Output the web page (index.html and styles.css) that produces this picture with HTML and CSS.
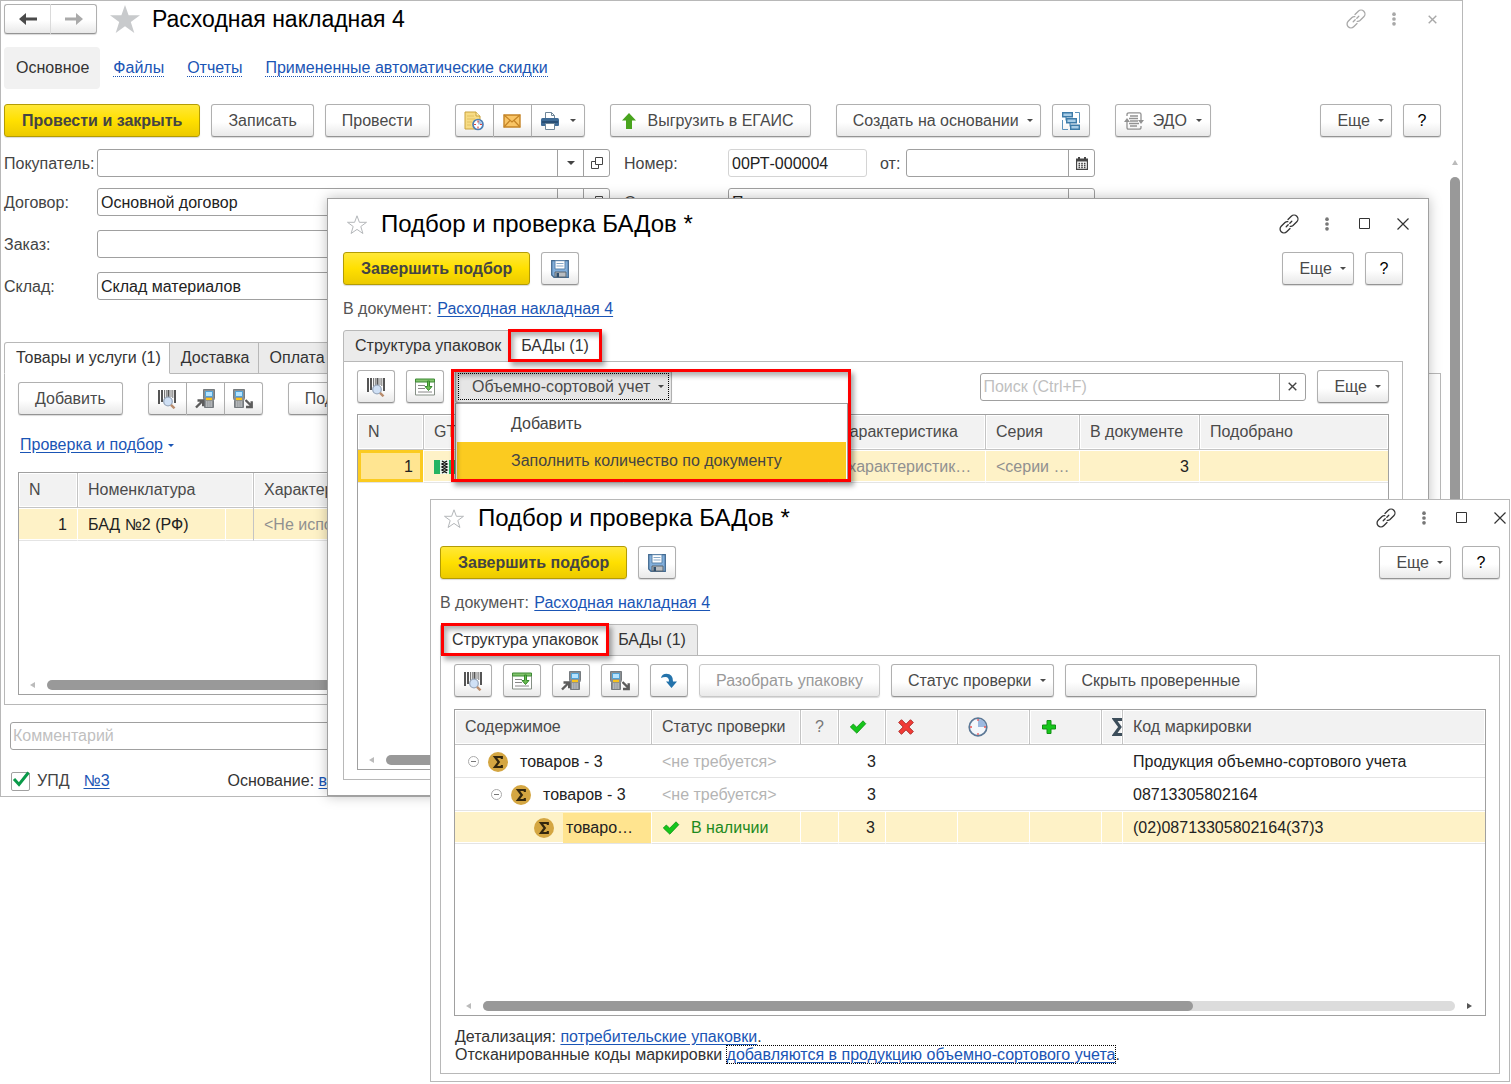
FILE: index.html
```html
<!DOCTYPE html>
<html lang="ru">
<head>
<meta charset="utf-8">
<title>Расходная накладная 4</title>
<link rel="stylesheet" href="styles.css">
</head>
<body>
<svg class="sprite" aria-hidden="true">
  <symbol id="i-star" viewBox="0 0 30 28"><path d="M15 0l3.600 10.200H30l-9.200 6.700L24.300 28 15 21.300 5.700 28l3.500-11.100L0 10.200h11.400z"/></symbol>
  <symbol id="i-star-o" viewBox="0 0 22 21"><path d="M11 1.800l2.400 6.500h7.100l-5.700 4.200 2.100 7L11 15.400l-5.900 4.100 2.100-7L1.500 8.300h7.100z" fill="#fff" stroke="#b4b7ba"/></symbol>
  <symbol id="i-back" viewBox="0 0 18 12"><path d="M0 6l7-6v4.500h11v3H7V12z"/></symbol>
  <symbol id="i-link" viewBox="0 0 20 20"><g fill="none" stroke="currentColor" stroke-width="1.300" stroke-linecap="round"><path d="M9 5.500l3.300-3.300a3.800 3.800 0 0 1 5.500 5.500l-3.800 3.800q-1.300 1.200-2.800.9"/><path d="M11 14.500l-3.300 3.300a3.800 3.800 0 0 1-5.500-5.500L6 8.500q1.300-1.200 2.800-.9"/><path d="M7.200 12.800l2-2M10.800 9.200l2-2"/></g></symbol>
  <symbol id="i-dots" viewBox="0 0 6 16"><circle cx="3" cy="2.500" r="2.100"/><circle cx="3" cy="8" r="2.100"/><circle cx="3" cy="13.500" r="2.100"/></symbol>
  <symbol id="i-max" viewBox="0 0 12 12"><path d="M.5 .5h10v10h-10z" fill="none" stroke="currentColor"/></symbol>
  <symbol id="i-close" viewBox="0 0 12 12"><path d="M.5.5l11 11M11.500.5l-11 11" fill="none" stroke="currentColor" stroke-width="1.200"/></symbol>
  <symbol id="i-close-s" viewBox="0 0 9 9"><path d="M.7.7l7.600 7.600M8.300.7L.7 8.300" fill="none" stroke="currentColor" stroke-width="1.400"/></symbol>
  <symbol id="i-note" viewBox="0 0 20 20"><path d="M1 1h11l4 4v13H1z" fill="#f7dc85" stroke="#c9a23c"/><path d="M12 1v4h4" fill="#fff3c0" stroke="#c9a23c"/><path d="M3 5h7M3 8h8M3 11h5M3 14h4" stroke="#e3c263"/><circle cx="14" cy="13.500" r="5" fill="#fff" stroke="#4e7fb5" stroke-width="1.700"/><path d="M14 13.500V9.500a4 4 0 0 1 4 4z" fill="#a8c3e4"/><path d="M14 9.500v2M14 15.500v2M10 13.500h2M16 13.500h2" stroke="#e2453c" stroke-width="1.200"/></symbol>
  <symbol id="i-mail" viewBox="0 0 18 14"><path d="M1 1h16v12H1z" fill="#f9c566" stroke="#c58426" stroke-width="1.400"/><path d="M1 1l8 7 8-7M1 13l6-6.500M17 13l-6-6.500" fill="none" stroke="#c58426" stroke-width="1.200"/></symbol>
  <symbol id="i-print" viewBox="0 0 20 20"><path d="M5.500 8V1.500h6l3 3V8" fill="#fff" stroke="#6f8698"/><path d="M11.500 1.500v3h3" fill="none" stroke="#6f8698"/><path d="M1 8.500Q1 7 2.500 7h15Q19 7 19 8.500V14q0 1-1 1H2q-1 0-1-1z" fill="#3f6b96"/><path d="M2 11h16" stroke="#23466a" stroke-width="1.500"/><path d="M5.500 12.500h9v6h-9z" fill="#fff" stroke="#6f8698"/></symbol>
  <symbol id="i-up" viewBox="0 0 14 16"><path d="M7 0l7 7.500h-4V16H4V7.500H0z" fill="#49a41e"/></symbol>
  <symbol id="i-tree" viewBox="0 0 18 18"><path d="M13 .5h4.500V11M.5 8v9.500H6" fill="none" stroke="#5d93bb"/><path d="M4 5v3.500h1M8 11v3.500h1" fill="none" stroke="#3e7ca9"/><path d="M.7.700h9.600v4.100H.7zM4.700 6.700h9.600v4.100H4.700zM8.700 13.200h8.600v4.100H8.700z" fill="#a9cde6" stroke="#3e7ca9" stroke-width="1.400"/></symbol>
  <symbol id="i-edo" viewBox="0 0 20 18"><g fill="none" stroke="#929292" stroke-width="1.300"><path d="M3 4V2.500Q3 .8 5 .8h10.500Q17 .8 17 2.500V9M17 14v1.500q0 1.700-2 1.700H4.500Q3 17.200 3 15.500V9"/><path d="M6 4h8M5 6.500h9M6 9h8M5 11.500h10M6 14h7"/></g><path d="M3 6l3 4H0zM17 12l3-4h-6z" fill="#929292"/></symbol>
  <symbol id="i-open" viewBox="0 0 12 12"><path d="M4.500.5h7v7h-7zM4.500 4.500h-4v7h7v-4" fill="none" stroke="#444"/></symbol>
  <symbol id="i-cal" viewBox="0 0 12 13"><path d="M.6 2.500h10.800v9.900H.6z" fill="#fff" stroke="#444" stroke-width="1.200"/><path d="M0 1.500h12v3H0z" fill="#444"/><path d="M3 0v3M9 0v3" stroke="#444" stroke-width="2"/><path d="M2.500 6.500h7M2.500 8.500h7M2.500 10.500h7" stroke="#444" stroke-width="1.400" stroke-dasharray="1.600 1.100"/></symbol>
  <symbol id="i-barcode" viewBox="0 0 20 20"><path d="M2 1v14M5 1v12M11.500 1v7M18 1v13" stroke="#555" stroke-width="2"/><path d="M7.500 1v13M9.300 1v7M14 1v7M15.800 1v8" stroke="#777"/><circle cx="11" cy="12.500" r="4.300" fill="#cfe0f5" stroke="#9aa9bd" stroke-width="1.300"/><path d="M14 15.800l3.500 3.500" stroke="#b98d6e" stroke-width="2.400"/></symbol>
  <symbol id="i-fill" viewBox="0 0 20 17"><path d="M.5 3v13.500h19V3" fill="#fff" stroke="#858f85"/><path d="M.5.5h19v3H.5z" fill="#82c36c" stroke="#3d8b35"/><path d="M3 7h7M3 10h7M3 13.500h14" stroke="#888"/><path d="M12.500 2.500h2V8H17l-3.500 4L10 8h2.500z" fill="#68bc4f" stroke="#36882d"/></symbol>
  <symbol id="i-tsd" viewBox="0 0 12 19"><path d="M.5 .5h11v9l-1 2v7h-9v-7l-1-2z" fill="#8b8f92" stroke="#767b7f"/><path d="M2.500 2.500h7v5h-7z" fill="#b5e3ff" stroke="#4fa3d8"/><path d="M3 10h6" stroke="#f8c21c" stroke-width="2.200"/><path d="M3 13h6M3 15h6M3 17h6" stroke="#dfe1e3" stroke-dasharray="1.500 .7"/></symbol>
  <symbol id="i-tsd-in" viewBox="0 0 20 20"><use href="#i-tsd" x="8" y="0" width="12" height="19"/><path d="M1 18.500l6-6M2.500 11.500h5.700v5.700" fill="none" stroke="#5c5c5c" stroke-width="2.400"/></symbol>
  <symbol id="i-tsd-out" viewBox="0 0 20 20"><use href="#i-tsd" x="0" y="0" width="12" height="19"/><path d="M12.500 11l6 6M13 18h5.700v-5.700" fill="none" stroke="#5c5c5c" stroke-width="2.400"/></symbol>
  <symbol id="i-turn" viewBox="0 0 16 15"><path d="M0 4.500Q1 .3 5.500.3 12 .3 12 8h4l-5.500 6.500L5 8h3Q8 3.500 4.500 3.500 2 3.500 0 4.500z" fill="#2473ab"/></symbol>
  <symbol id="i-save" viewBox="0 0 18 18"><path d="M.7.700h16.600v16.600H3L.7 15z" fill="#81aedb" stroke="#446b91" stroke-width="1.300"/><path d="M4 .700h10V9H4z" fill="#fff" stroke="#5b83aa"/><path d="M5.500 3.500h7M5.500 6h7" stroke="#88a9c8"/><path d="M4 12h11v5H4z" fill="#b9bdc1" stroke="#5b6670"/><path d="M5.500 13H8v4H5.500z" fill="#2f4e6c"/></symbol>
  <symbol id="i-sigma" viewBox="0 0 20 20"><circle cx="10" cy="10" r="10" fill="#d4a642"/><path d="M13.800 7V5H7L10.800 10 7 15h6.800V13" fill="none" stroke="#33270e" stroke-width="2.200"/></symbol>
  <symbol id="i-check" viewBox="0 0 17 14"><path d="M.8 7l3-3 3.400 3.200L13.500.8 16.300 3.700 7.300 13.200z" fill="#16c61b" stroke="#129115" stroke-width=".8"/></symbol>
  <symbol id="i-cross" viewBox="0 0 16 16"><path d="M3.500.7L8 5.200 12.500.7l2.800 2.800L10.800 8l4.500 4.500-2.800 2.800L8 10.800l-4.500 4.500L.7 12.500 5.200 8 .7 3.500z" fill="#f23b36" stroke="#b02f2c"/></symbol>
  <symbol id="i-clock" viewBox="0 0 20 20"><circle cx="10" cy="10" r="8.800" fill="#f4f7fb" stroke="#5c7896" stroke-width="1.700"/><path d="M10 10V2a8 8 0 0 1 8 8z" fill="#9db9e0"/><path d="M10 2v2M10 16v2M2 10h2M16 10h2" stroke="#e55" stroke-width="1.300"/></symbol>
  <symbol id="i-plus" viewBox="0 0 14 14"><path d="M5 .5h4V5h4.500v4H9v4.500H5V9H.5V5H5z" fill="#16c61b" stroke="#129115"/></symbol>
  <symbol id="i-sum" viewBox="0 0 14 18"><path d="M14 1.500H2.500L8 9l-5.500 7.500H14" fill="none" stroke="#3c4d5a" stroke-width="3"/></symbol>
  <symbol id="i-minus" viewBox="0 0 11 11"><circle cx="5.500" cy="5.500" r="5" fill="#fff" stroke="#aaa"/><path d="M3 5.500h5" stroke="#777"/></symbol>
  <symbol id="i-tick" viewBox="0 0 18 16"><path d="M2 8l5 5.500L16.500 1.500" fill="none" stroke="#0a9a49" stroke-width="3"/></symbol>
  <symbol id="i-mark" viewBox="0 0 24 14"><path d="M0 0h24v14H0z" fill="#25b463"/><path d="M6 0h9v14H6z" fill="#e8f5ec"/><path d="M8 1l5 3-5 3 5 3-5 3M13 1L8 4l5 3-5 3 5 3" fill="none" stroke="#111" stroke-width="1.400"/></symbol>
</svg>

<main class="desktop">

  <section class="window window-doc" aria-label="Расходная накладная 4">
    <header class="titlebar">
      <div class="group nav-group">
        <button type="button" class="btn" aria-label="Назад"><svg class="ic nav"><use href="#i-back"/></svg></button>
        <button type="button" class="btn" aria-label="Вперед"><svg class="ic nav forward"><use href="#i-back"/></svg></button>
      </div>
      <svg class="star-full"><use href="#i-star"/></svg>
      <h1>Расходная накладная 4</h1>
      <div class="win-tools muted">
        <button type="button" aria-label="Ссылка"><svg class="ic s20"><use href="#i-link"/></svg></button>
        <button type="button" aria-label="Меню"><svg class="ic dots"><use href="#i-dots"/></svg></button>
        <button type="button" aria-label="Закрыть"><svg class="ic s9"><use href="#i-close-s"/></svg></button>
      </div>
    </header>
    <nav class="sections">
      <span class="current">Основное</span>
      <a href="#">Файлы</a>
      <a href="#">Отчеты</a>
      <a href="#">Примененные автоматические скидки</a>
    </nav>
    <div class="toolbar main-tools">
      <div class="cluster">
        <button type="button" class="btn primary">Провести и закрыть</button>
        <button type="button" class="btn">Записать</button>
        <button type="button" class="btn">Провести</button>
      </div>
      <div class="group">
        <button type="button" class="btn icon" aria-label="Дата"><svg class="ic s20"><use href="#i-note"/></svg></button>
        <button type="button" class="btn icon" aria-label="Письмо"><svg class="ic mail"><use href="#i-mail"/></svg></button>
        <button type="button" class="btn print" aria-label="Печать"><svg class="ic s20"><use href="#i-print"/></svg><i class="caret"></i></button>
      </div>
      <button type="button" class="btn with-icon egais"><svg class="ic up"><use href="#i-up"/></svg>Выгрузить в ЕГАИС</button>
      <div class="cluster">
        <button type="button" class="btn drop">Создать на основании<i class="caret"></i></button>
        <button type="button" class="btn icon" aria-label="Структура подчиненности"><svg class="ic s18"><use href="#i-tree"/></svg></button>
      </div>
      <button type="button" class="btn with-icon drop edo"><svg class="ic s20"><use href="#i-edo"/></svg>ЭДО<i class="caret"></i></button>
      <div class="cluster end">
        <button type="button" class="btn drop">Еще<i class="caret"></i></button>
        <button type="button" class="btn icon help">?</button>
      </div>
    </div>

    <div class="doc-body">
      <div class="doc-form">
        <div class="fields">
          <div class="field-row">
            <label for="buyer">Покупатель:</label>
            <div class="combo wide"><input id="buyer" type="text"><button type="button" aria-label="Выбрать"><i class="caret big"></i></button><button type="button" aria-label="Открыть"><svg class="ic s12"><use href="#i-open"/></svg></button></div>
            <label for="num" class="second">Номер:</label>
            <div class="combo num"><input id="num" type="text" value="00РТ-000004"></div>
            <label for="date" class="third">от:</label>
            <div class="combo date"><input id="date" type="text"><button type="button" aria-label="Календарь"><svg class="ic cal"><use href="#i-cal"/></svg></button></div>
          </div>
          <div class="field-row">
            <label for="contract">Договор:</label>
            <div class="combo wide"><input id="contract" type="text" value="Основной договор"><button type="button" aria-label="Выбрать"><i class="caret big"></i></button><button type="button" aria-label="Открыть"><svg class="ic s12"><use href="#i-open"/></svg></button></div>
            <label for="org" class="second">Организация:</label>
            <div class="combo org"><input id="org" type="text" value="Продавец"><button type="button" aria-label="Открыть"></button></div>
          </div>
        </div>
        <div class="fields loose">
          <div class="field-row">
            <label for="order">Заказ:</label>
            <div class="combo wide"><input id="order" type="text"></div>
          </div>
          <div class="field-row">
            <label for="store">Склад:</label>
            <div class="combo wide"><input id="store" type="text" value="Склад материалов"></div>
          </div>
        </div>

        <div class="tabs doc-tabs">
          <button type="button" class="tab active">Товары и услуги (1)</button>
          <button type="button" class="tab">Доставка</button>
          <button type="button" class="tab">Оплата</button>
        </div>
        <div class="panel">
          <div class="toolbar spaced">
            <button type="button" class="btn">Добавить</button>
            <div class="group">
              <button type="button" class="btn icon" aria-label="Поиск по штрихкоду"><svg class="ic s20"><use href="#i-barcode"/></svg></button>
              <button type="button" class="btn icon" aria-label="Загрузить из ТСД"><svg class="ic s20"><use href="#i-tsd-in"/></svg></button>
              <button type="button" class="btn icon" aria-label="Выгрузить в ТСД"><svg class="ic s20"><use href="#i-tsd-out"/></svg></button>
            </div>
            <button type="button" class="btn">Подбор</button>
          </div>
          <p class="check-link"><a href="#">Проверка и подбор</a><i class="caret"></i></p>
          <div class="grid-box">
            <table>
              <colgroup><col class="w59"><col class="w148"><col class="w28"><col></colgroup>
              <thead><tr><th>N</th><th colspan="2">Номенклатура</th><th>Характеристика</th></tr></thead>
              <tbody><tr class="picked"><td class="num-cell">1</td><td>БАД №2 (РФ)</td><td class="ruled"></td><td class="pale">&lt;Не используется&gt;</td></tr></tbody>
            </table>
            <div class="hscroll"><i class="arrow left"></i><span class="track"><span class="thumb"></span></span></div>
          </div>
        </div>
        <div class="combo comment"><input type="text" placeholder="Комментарий" aria-label="Комментарий"></div>
        <div class="bottom-row">
          <label class="tickbox"><span class="box"><input type="checkbox" checked><svg><use href="#i-tick"/></svg></span>УПД</label>
          <a href="#">№3</a>
          <span class="basis">Основание: <a href="#">выбрать</a></span>
        </div>
      </div>
      <div class="vscroll"><i class="arrow top"></i><span class="thumb"></span></div>
    </div>
  </section>

  <section class="window window-pick" aria-label="Подбор и проверка БАДов">
    <header class="titlebar">
      <svg class="star-line"><use href="#i-star-o"/></svg>
      <h2>Подбор и проверка БАДов *</h2>
      <div class="win-tools">
        <button type="button" aria-label="Ссылка"><svg class="ic s20"><use href="#i-link"/></svg></button>
        <button type="button" aria-label="Меню"><svg class="ic dots"><use href="#i-dots"/></svg></button>
        <button type="button" aria-label="Развернуть"><svg class="ic s12"><use href="#i-max"/></svg></button>
        <button type="button" aria-label="Закрыть"><svg class="ic s12"><use href="#i-close"/></svg></button>
      </div>
    </header>
    <div class="toolbar">
      <button type="button" class="btn primary">Завершить подбор</button>
      <button type="button" class="btn icon" aria-label="Сохранить"><svg class="ic s18"><use href="#i-save"/></svg></button>
      <div class="cluster end">
        <button type="button" class="btn drop">Еще<i class="caret"></i></button>
        <button type="button" class="btn icon help">?</button>
      </div>
    </div>
    <p class="doc-ref">В документ: <a href="#">Расходная накладная 4</a></p>
    <div class="tabs">
      <button type="button" class="tab">Структура упаковок</button>
      <button type="button" class="tab active">БАДы (1)<span class="callout on-right"></span></button>
    </div>
    <div class="panel">
      <div class="toolbar">
        <button type="button" class="btn icon" aria-label="Поиск по штрихкоду"><svg class="ic s20"><use href="#i-barcode"/></svg></button>
        <button type="button" class="btn icon" aria-label="Заполнить"><svg class="ic s20"><use href="#i-fill"/></svg></button>
        <div class="menu-anchor">
          <button type="button" class="btn drop pressed">Объемно-сортовой учет<i class="caret"></i></button>
          <div class="menu" role="menu">
            <button type="button" role="menuitem">Добавить</button>
            <button type="button" role="menuitem" class="hot">Заполнить количество по документу</button>
          </div>
          <span class="callout on-menu"></span>
        </div>
        <div class="cluster end">
          <div class="combo search"><input type="search" placeholder="Поиск (Ctrl+F)" aria-label="Поиск"><button type="button" aria-label="Очистить"><svg class="ic s9"><use href="#i-close-s"/></svg></button></div>
          <button type="button" class="btn drop">Еще<i class="caret"></i></button>
        </div>
      </div>
      <div class="grid-box">
        <table>
          <colgroup><col class="w66"><col class="w200"><col class="w205"><col class="w157"><col class="w94"><col class="w120"><col></colgroup>
          <thead><tr><th>N</th><th>GTIN</th><th>Номенклатура</th><th>Характеристика</th><th>Серия</th><th>В документе</th><th>Подобрано</th></tr></thead>
          <tbody><tr class="picked"><td class="num-cell focus-cell">1</td><td class="mark-cell"><svg><use href="#i-mark"/></svg></td><td></td><td class="pale">&lt;характеристик…</td><td class="pale">&lt;серии …</td><td class="num-cell">3</td><td></td></tr></tbody>
        </table>
        <div class="hscroll"><i class="arrow left"></i><span class="track"><span class="thumb"></span></span></div>
      </div>
    </div>
  </section>

  <section class="window window-pack" aria-label="Структура упаковок">
    <header class="titlebar">
      <svg class="star-line"><use href="#i-star-o"/></svg>
      <h2>Подбор и проверка БАДов *</h2>
      <div class="win-tools">
        <button type="button" aria-label="Ссылка"><svg class="ic s20"><use href="#i-link"/></svg></button>
        <button type="button" aria-label="Меню"><svg class="ic dots"><use href="#i-dots"/></svg></button>
        <button type="button" aria-label="Развернуть"><svg class="ic s12"><use href="#i-max"/></svg></button>
        <button type="button" aria-label="Закрыть"><svg class="ic s12"><use href="#i-close"/></svg></button>
      </div>
    </header>
    <div class="toolbar">
      <button type="button" class="btn primary">Завершить подбор</button>
      <button type="button" class="btn icon" aria-label="Сохранить"><svg class="ic s18"><use href="#i-save"/></svg></button>
      <div class="cluster end">
        <button type="button" class="btn drop">Еще<i class="caret"></i></button>
        <button type="button" class="btn icon help">?</button>
      </div>
    </div>
    <p class="doc-ref">В документ: <a href="#">Расходная накладная 4</a></p>
    <div class="tabs">
      <button type="button" class="tab active">Структура упаковок<span class="callout on-left"></span></button>
      <button type="button" class="tab">БАДы (1)</button>
    </div>
    <div class="panel">
      <div class="toolbar">
        <button type="button" class="btn icon" aria-label="Поиск по штрихкоду"><svg class="ic s20"><use href="#i-barcode"/></svg></button>
        <button type="button" class="btn icon" aria-label="Заполнить"><svg class="ic s20"><use href="#i-fill"/></svg></button>
        <button type="button" class="btn icon" aria-label="Загрузить из ТСД"><svg class="ic s20"><use href="#i-tsd-in"/></svg></button>
        <button type="button" class="btn icon" aria-label="Выгрузить в ТСД"><svg class="ic s20"><use href="#i-tsd-out"/></svg></button>
        <button type="button" class="btn icon" aria-label="Перейти"><svg class="ic s16"><use href="#i-turn"/></svg></button>
        <button type="button" class="btn" disabled>Разобрать упаковку</button>
        <button type="button" class="btn drop">Статус проверки<i class="caret"></i></button>
        <button type="button" class="btn">Скрыть проверенные</button>
      </div>
      <div class="grid-box">
        <table class="tree">
          <colgroup><col class="w197"><col class="w149"><col class="w38"><col class="w47"><col class="w72"><col class="w72"><col class="w72"><col class="w21"><col></colgroup>
          <thead><tr>
            <th>Содержимое</th><th>Статус проверки</th><th class="center">?</th>
            <th><svg class="ic check"><use href="#i-check"/></svg></th>
            <th class="inset"><svg class="ic s16"><use href="#i-cross"/></svg></th>
            <th><svg class="ic s20"><use href="#i-clock"/></svg></th>
            <th class="inset"><svg class="ic s14"><use href="#i-plus"/></svg></th>
            <th class="tight"><svg class="ic sum"><use href="#i-sum"/></svg></th>
            <th>Код маркировки</th>
          </tr></thead>
          <tbody>
            <tr><td class="node"><div class="node-in"><svg class="ic s11"><use href="#i-minus"/></svg><svg class="ic s20"><use href="#i-sigma"/></svg><span>товаров - 3</span></div></td><td class="faint">&lt;не требуется&gt;</td><td></td><td class="num-cell">3</td><td></td><td></td><td></td><td></td><td>Продукция объемно-сортового учета</td></tr>
            <tr><td class="node"><div class="node-in level2"><svg class="ic s11"><use href="#i-minus"/></svg><svg class="ic s20"><use href="#i-sigma"/></svg><span>товаров - 3</span></div></td><td class="faint">&lt;не требуется&gt;</td><td></td><td class="num-cell">3</td><td></td><td></td><td></td><td></td><td>08713305802164</td></tr>
            <tr class="picked"><td class="node"><div class="node-in level3"><svg class="ic s20"><use href="#i-sigma"/></svg><span>товаро…</span></div></td><td class="ok"><svg class="ic check"><use href="#i-check"/></svg>В наличии</td><td></td><td class="num-cell">3</td><td></td><td></td><td></td><td></td><td>(02)08713305802164(37)3</td></tr>
          </tbody>
        </table>
        <div class="hscroll"><i class="arrow left"></i><span class="track light"><span class="thumb part"></span></span><i class="arrow right"></i></div>
      </div>
      <p class="details">Детализация: <a href="#">потребительские упаковки</a>.<br>Отсканированные коды маркировки <a href="#" class="focused">добавляются в продукцию объемно-сортового учета</a>.</p>
    </div>
  </section>

</main>
</body>
</html>
```
FILE: styles.css
```css
:root {
  --line: #a0a0a0;
  --soft-line: #b8b8b8;
  --text: #333;
  --link: #1a55b5;
  --picked: #fef2c7;
}

* { box-sizing: border-box; }

body {
  margin: 0;
  background: #fff;
  color: var(--text);
  font: 16px/18px "Liberation Sans", Arial, sans-serif;
}

button, input { font: inherit; color: inherit; }
button { margin: 0; padding: 0; white-space: nowrap; }
p, h1, h2 { margin: 0; }
a { color: var(--link); text-underline-offset: 2px; }

.sprite { position: absolute; width: 0; height: 0; }

/* Windows on the desktop */
.desktop { position: relative; min-height: 1084px; overflow: hidden; }

.window {
  position: absolute;
  display: flex;
  flex-direction: column;
  background: #fff;
  border: 1px solid var(--soft-line);
}
.window-doc { top: 0; left: 0; right: 48px; min-height: 797px; padding: 3px 21px 5px 3px; overflow: hidden; }
.window-pick {
  top: 198px; left: 327px; right: 82px; min-height: 598px;
  padding: 8px 25px 15px 15px;
  border-color: var(--line);
  box-shadow: 0 0 12px rgba(0, 0, 0, .25);
}
.window-pack { top: 499px; left: 430px; right: 1px; min-height: 583px; padding: 1px 9px 7px 9px; }

/* Icons */
.ic { display: block; flex: none; fill: currentColor; }
.s9 { width: 9px; height: 9px; }
.s11 { width: 11px; height: 11px; }
.s12 { width: 12px; height: 12px; }
.s14 { width: 14px; height: 14px; }
.s16 { width: 16px; height: 16px; }
.s18 { width: 18px; height: 18px; }
.s20 { width: 20px; height: 20px; }
.nav { width: 18px; height: 12px; }
.dots { width: 6px; height: 14px; }
.mail { width: 18px; height: 14px; }
.up { width: 14px; height: 16px; }
.cal { width: 12px; height: 13px; }
.check { width: 18px; height: 14px; }
.sum { width: 14px; height: 18px; }

.caret {
  flex: none;
  display: inline-block;
  border: 3px solid transparent;
  border-top-color: currentColor;
  border-bottom-width: 0;
}
.caret.big { border-width: 4px 4px 0; }

/* Title bar */
.titlebar { display: flex; align-items: center; height: 34px; margin-bottom: 11px; }
.window-doc .titlebar { height: 30px; margin-bottom: 13px; }
.titlebar h1, .titlebar h2 { color: #000; font-size: 24px; font-weight: 400; line-height: 30px; white-space: nowrap; }
.titlebar h1 { font-size: 23px; }
.star-full { width: 30px; height: 28px; margin: 0 12px 0 13px; fill: #c8cacc; }
.star-line { width: 22px; height: 21px; margin: 0 13px 0 3px; }
.nav-group { color: #444; }
.nav-group .btn { width: 46px; height: 30px; padding: 0; }
.forward { transform: rotate(180deg); color: #aaa; }

.win-tools { display: flex; gap: 20px; margin: 0 -9px 0 auto; color: #333; }
.win-tools.muted { margin-right: 0; color: #a8a8a8; }
.win-tools button { display: flex; justify-content: center; align-items: center; width: 18px; height: 20px; border: 0; background: none; }
.win-tools .dots { color: #777; }
.win-tools.muted .dots { color: #a8a8a8; }

/* Section links */
.sections { display: flex; align-items: center; gap: 23px; height: 42px; margin-bottom: 15px; white-space: nowrap; }
.sections .current { padding: 12px 11px 12px 12px; margin-right: -10px; border-radius: 4px; background: #f1f1f1; }
.sections a { text-decoration: none; border-bottom: 1px dotted var(--link); line-height: 17px; }

/* Buttons */
.toolbar, .cluster { display: flex; align-items: center; gap: 11px; }
.toolbar { flex: none; }
.main-tools, .toolbar.spaced { gap: 25px; }
.end { margin-left: auto; }

.btn {
  display: flex;
  align-items: center;
  justify-content: center;
  flex: none;
  height: 33px;
  padding: 0 16px;
  border: 1px solid #b0b0b0;
  border-bottom-color: #949494;
  border-radius: 3px;
  background: linear-gradient(#fff, #fff 55%, #e9e9e9);
  box-shadow: 0 1px 1px rgba(0, 0, 0, .15);
  color: #4a4a4a;
}
.btn.primary {
  padding: 0 17px;
  border-color: #b39c05;
  background: linear-gradient(#ffe838, #ffe000 50%, #ecca00);
  color: #444;
  font-weight: 700;
}
.btn.icon { width: 38px; padding: 0; }
.btn.help { color: #000; }
.btn.drop { padding-right: 7px; gap: 8px; }
.btn.with-icon { padding-left: 11px; gap: 12px; }
.btn.edo { padding: 0 8px; gap: 9px; }
.btn.print { width: 53px; padding: 0; gap: 10px; }
.btn:disabled { color: #999; border-color: #c8c8c8; }
.btn.pressed {
  background: #e6e6e6;
  outline: 1px dotted #000;
  outline-offset: -4px;
}

.group { display: flex; }
.group .btn { border-radius: 0; }
.group .btn + .btn { border-left: 0; }
.group .btn:first-child { border-radius: 3px 0 0 3px; width: 39px; }
.group .btn:last-child { border-radius: 0 3px 3px 0; }
.group.nav-group .btn:first-child { width: 47px; border-right-color: #ddd; }

/* Fields */
.doc-body { display: flex; flex: 1; margin: 12px -19px 0 0; }
.doc-form { display: flex; flex: 1; flex-direction: column; min-width: 0; }
.fields { display: flex; flex-direction: column; gap: 11px; }
.fields.loose { gap: 14px; margin-top: 14px; }
.field-row { display: flex; align-items: center; color: #444; }
.field-row label { flex: none; width: 93px; padding-top: 1px; }
.field-row .second { width: 104px; margin-left: 14px; }
.field-row .third { width: 26px; margin-left: 13px; }

.combo { display: flex; flex: none; height: 28px; border: 1px solid var(--line); border-radius: 3px; background: #fff; }
.combo input { flex: 1; min-width: 0; padding: 1px 3px 0; border: 0; background: none; outline: 0; color: #222; }
.combo input::placeholder { color: #bfbfbf; opacity: 1; }
.combo button { display: flex; align-items: center; justify-content: center; width: 26px; border: 0; border-left: 1px solid var(--line); background: none; color: #444; }
.wide { width: 513px; }
.num { width: 139px; border-color: #d4d4d4; }
.date { width: 189px; }
.org { width: 367px; }
.search { width: 326px; }
.search input { padding: 0 2px; appearance: none; }
.comment { margin: 17px 0 0 6px; }
.comment input { padding: 0 2px; }

/* Tabs */
.tabs { position: relative; display: flex; flex: none; margin: 13px 0 -1px; }
.doc-tabs { margin-top: 42px; }
.tab {
  position: relative;
  height: 32px;
  padding: 0 8px 0 11px;
  border: 1px solid var(--soft-line);
  border-left-width: 0;
  background: #ebebeb;
  color: #333;
}
.tab:first-child { border-left-width: 1px; border-top-left-radius: 3px; }
.tab:last-child { padding-right: 11px; border-top-right-radius: 3px; }
.tab.active { border-bottom-color: #fff; background: #fff; }

.panel { display: flex; flex: 1; flex-direction: column; padding: 8px 13px 9px; border: 1px solid var(--soft-line); }

.check-link { margin: 21px 0 7px 2px; color: var(--link); }
.check-link .caret { margin: 0 0 3px 5px; }
.doc-ref { margin-top: 14px; padding-top: 1px; margin-bottom: -1px; color: #555; }
.doc-ref a { margin-left: 1px; }

/* Tables */
.grid-box { display: flex; flex: 1; flex-direction: column; margin-top: 11px; border: 1px solid var(--line); }
.window-pack .grid-box { margin-top: 12px; }
table { width: 100%; table-layout: fixed; border-spacing: 0; }
th, td { padding: 0 10px; overflow: hidden; text-align: left; white-space: nowrap; font-weight: 400; }
th { height: 35px; border-right: 1px solid #c4c4c4; border-bottom: 1px solid #c4c4c4; background: #f2f2f2; box-shadow: inset 0 0 0 1px #fff; color: #4a4a4a; }
th.inset { padding-left: 12px; }
th.tight { padding-right: 0; }
td { height: 33px; padding-top: 1px; border-bottom: 1px solid #e4e4e4; color: #222; }
th:last-child { border-right: 0; }
.picked td { border-right: 1px solid #fff; background: var(--picked); box-shadow: inset 0 -1px #fff, inset 0 1px #fff; }
.picked td:last-child { border-right: 0; }
.picked .ruled { border-right-color: #c4c4c4; }
.num-cell { text-align: right; }
.center { text-align: center; color: #777; }
td.pale { color: #909090; }
td.faint { color: #b4b4b4; }
td.ok { color: #1d8a1d; }
.ok .ic { display: inline-block; margin-right: 11px; vertical-align: -2px; }
.picked .focus-cell { background: #ffe591; box-shadow: inset 0 0 0 3px #fbcb20; }
.mark-cell svg { display: block; width: 24px; height: 14px; }

.w21 { width: 21px; } .w28 { width: 28px; } .w38 { width: 38px; } .w47 { width: 47px; }
.w59 { width: 59px; } .w66 { width: 66px; } .w72 { width: 72px; } .w94 { width: 94px; }
.w120 { width: 120px; } .w148 { width: 148px; } .w149 { width: 149px; } .w157 { width: 157px; }
.w197 { width: 197px; } .w200 { width: 200px; } .w205 { width: 205px; }

.tree td.node { padding: 0; }
.node-in { display: flex; align-items: center; height: 32px; padding: 1px 0 0 13px; }
.node-in .s20 { margin: 0 12px 0 9px; }
.node-in.level2 { padding-left: 36px; }
.node-in.level3 { padding-left: 79px; }
.node-in.level3 .s20 { margin: 0 9px 0 0; }
.level3 span { flex: 1; padding: 6px 3px; background: #ffe48f; }

/* Scroll bars */
.hscroll { display: flex; align-items: center; height: 18px; margin-top: auto; padding: 0 13px 0 11px; gap: 12px; }
.track { flex: 1; height: 10px; border-radius: 5px; }
.track.light { background: #dcdcdc; }
.thumb { display: block; height: 10px; border-radius: 5px; background: #999; }
.thumb.part { width: 73%; }
.arrow { flex: none; width: 0; height: 0; border: 3px solid transparent; }
.arrow.left { border-width: 3px 5px 3px 0; border-right-color: #bbb; }
.arrow.right { border-width: 3px 0 3px 5px; border-left-color: #555; }
.arrow.top { border-width: 0 3px 5px; border-bottom-color: #bbb; }
.vscroll { display: flex; flex-direction: column; align-items: center; gap: 12px; width: 10px; margin-left: 9px; padding-top: 11px; }
.vscroll .thumb { flex: 1; width: 10px; }

/* Bottom of the document */
.bottom-row { display: flex; align-items: center; height: 20px; margin: 21px 0 0 7px; white-space: nowrap; }
.tickbox { display: flex; align-items: center; gap: 7px; margin-right: 14px; color: #444; }
.box { position: relative; width: 19px; height: 19px; }
.box input { display: block; width: 19px; height: 19px; margin: 0; appearance: none; border: 1px solid var(--line); border-radius: 2px; }
.box svg { position: absolute; left: 1px; top: -1px; width: 18px; height: 16px; }
.basis { margin-left: 118px; }

/* Drop-down menu */
.menu-anchor { position: relative; }
.menu {
  position: absolute;
  z-index: 2;
  top: 33px;
  left: 0;
  width: 393px;
  padding: 1px;
  border: 1px solid var(--line);
  background: #fff;
}
.menu button { display: block; width: 100%; height: 37px; padding: 0 54px; border: 0; background: #fff; color: #444; text-align: left; }
.menu .hot { background: #fbcb20; }
.menu-anchor::before {
  content: "";
  position: absolute;
  z-index: 1;
  top: 0;
  left: 0;
  width: 393px;
  height: 33px;
  background: #fff;
}
.menu-anchor .pressed { position: relative; z-index: 2; }

/* Red callout frames */
.callout {
  position: absolute;
  z-index: 3;
  border: 3px solid #f00;
  box-shadow: 3px 4px 5px rgba(0, 0, 0, .35), inset 3px 4px 5px rgba(0, 0, 0, .3);
  pointer-events: none;
}
.on-right { inset: -2px -2px -1px -2px; }
.on-left { inset: -2px -3px -1px 0; }
.on-menu { top: -1px; left: -4px; width: 400px; height: 113px; }

.details { margin: 12px 0 0 1px; }
.focused { outline: 1px dotted #000; }
```
